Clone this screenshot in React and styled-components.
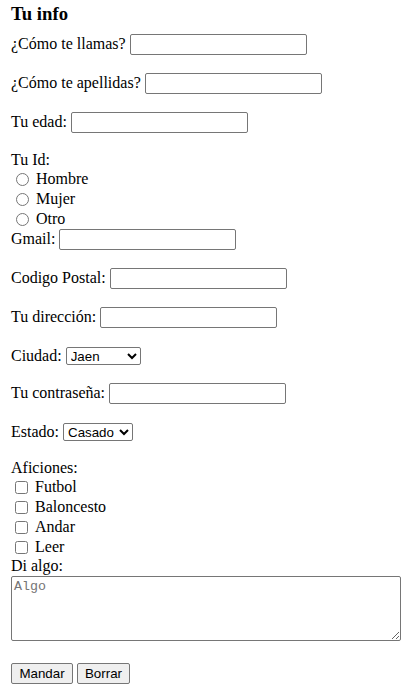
import React from "react";
import styled, { createGlobalStyle } from "styled-components";

const GlobalStyle = createGlobalStyle`
  html, body { margin: 0; padding: 0; background: #fff; }
  body {
    color: #000;
    font-family: "Liberation Serif", "Times New Roman", serif;
    font-size: 16px;
  }
`;

const Form = styled.form`
  display: flex;
  flex-direction: column;
  align-items: flex-start;
  padding: 3px 0 0 11px;
`;

const Heading = styled.h3`
  margin: 0 0 9px;
  font-size: 18.72px;
  line-height: 22px;
  font-weight: 700;
`;

const Field = styled.div`
  display: flex;
  align-items: baseline;
  gap: 4px;
  line-height: 18px;
  padding-top: ${(p) => (p.$pt ?? 0)}px;
  margin-bottom: 18px;
`;

const Label = styled.label`
  line-height: 18px;
  white-space: nowrap;
`;

const GroupTitle = styled.div`
  line-height: 18px;
`;

const OptionLine = styled.label`
  display: flex;
  align-items: center;
  height: 20px;
  line-height: 18px;
`;

const controlFont = `13.333px "Liberation Sans", Arial, sans-serif`;

const TextInput = styled.input`
  box-sizing: border-box;
  width: 177px;
  height: 21px;
  margin: 0;
  padding: 1px 2px;
  border: 1px solid #767676;
  border-radius: 2px;
  background: #fff;
  font: ${controlFont};
`;

const Select = styled.select`
  box-sizing: border-box;
  width: ${(p) => p.$w}px;
  height: 18px;
  margin: 0;
  border: 1px solid #767676;
  border-radius: 2px;
  background: #fff;
  color: #000;
  font: ${controlFont};
`;

const Radio = styled.input`
  width: 13px;
  height: 13px;
  margin: 0 7px 0 5px;
`;

const Checkbox = styled.input`
  width: 13px;
  height: 13px;
  margin: 0 7px 0 4px;
`;

const TextArea = styled.textarea`
  display: block;
  box-sizing: border-box;
  width: 390px;
  height: 65px;
  margin: 1px 0 22px;
  padding: 2px;
  border: 1px solid #767676;
  border-radius: 2px;
  font: 13.333px "Liberation Mono", "Courier New", monospace;
  &::placeholder {
    color: #757575;
  }
`;

const Buttons = styled.div`
  display: flex;
  gap: 4px;
`;

const Button = styled.button`
  box-sizing: border-box;
  width: ${(p) => p.$w}px;
  height: 21px;
  margin: 0;
  padding: 0;
  border: 1px solid #767676;
  border-radius: 2px;
  background: #efefef;
  color: #000;
  font: ${controlFont};
  text-align: center;
`;

const genders = ["Hombre", "Mujer", "Otro"];
const hobbies = ["Futbol", "Baloncesto", "Andar", "Leer"];

export default function App() {
  return (
    <>
      <GlobalStyle />
      <Form onSubmit={(e) => e.preventDefault()}>
        <Heading>Tu info</Heading>

        <Field>
          <Label htmlFor="nombre">¿Cómo te llamas?</Label>
          <TextInput id="nombre" type="text" />
        </Field>
        <Field>
          <Label htmlFor="apellido">¿Cómo te apellidas?</Label>
          <TextInput id="apellido" type="text" />
        </Field>
        <Field>
          <Label htmlFor="edad">Tu edad:</Label>
          <TextInput id="edad" type="text" />
        </Field>

        <GroupTitle>Tu Id:</GroupTitle>
        {genders.map((g) => (
          <OptionLine key={g}>
            <Radio type="radio" name="id" value={g} />
            {g}
          </OptionLine>
        ))}

        <Field>
          <Label htmlFor="gmail">Gmail:</Label>
          <TextInput id="gmail" type="text" />
        </Field>
        <Field>
          <Label htmlFor="cp">Codigo Postal:</Label>
          <TextInput id="cp" type="text" />
        </Field>
        <Field>
          <Label htmlFor="dir">Tu dirección:</Label>
          <TextInput id="dir" type="text" />
        </Field>
        <Field $pt={1}>
          <Label htmlFor="ciudad">Ciudad:</Label>
          <Select id="ciudad" $w={75} defaultValue="Jaen">
            <option>Jaen</option>
            <option>Granada</option>
            <option>Cordoba</option>
          </Select>
        </Field>
        <Field>
          <Label htmlFor="pass">Tu contraseña:</Label>
          <TextInput id="pass" type="password" />
        </Field>
        <Field $pt={1}>
          <Label htmlFor="estado">Estado:</Label>
          <Select id="estado" $w={70} defaultValue="Casado">
            <option>Casado</option>
            <option>Soltero</option>
          </Select>
        </Field>

        <GroupTitle>Aficiones:</GroupTitle>
        {hobbies.map((h) => (
          <OptionLine key={h}>
            <Checkbox type="checkbox" value={h} />
            {h}
          </OptionLine>
        ))}

        <GroupTitle>Di algo:</GroupTitle>
        <TextArea placeholder="Algo" />

        <Buttons>
          <Button type="submit" $w={62}>Mandar</Button>
          <Button type="reset" $w={53}>Borrar</Button>
        </Buttons>
      </Form>
    </>
  );
}
